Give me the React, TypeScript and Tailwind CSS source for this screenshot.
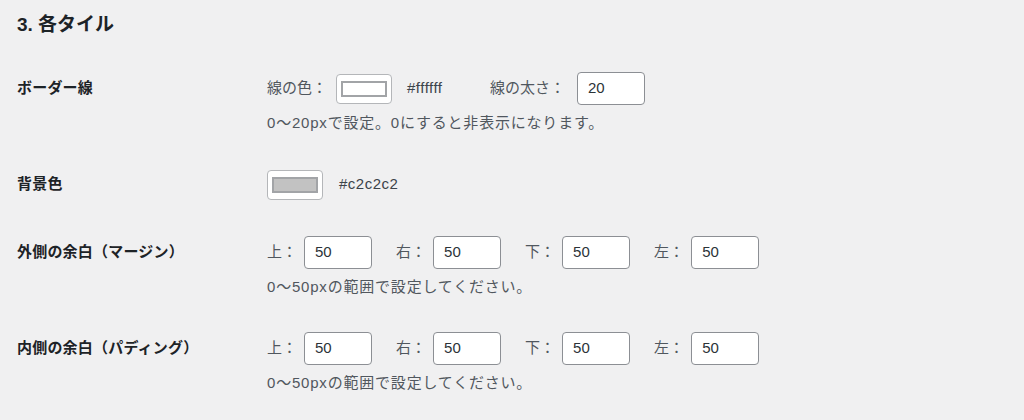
import React from 'react';

const FONT = { fontFamily: '"Liberation Sans", "Noto Sans CJK JP", sans-serif' };

// WordPress風のカラーピッカーボタン
function ColorButton({ color }: { color: string }) {
  return (
    <div className="flex h-[30px] w-[56px] items-center justify-center rounded-[4px] border border-[#b4b6b9] bg-white">
      <div className="h-[16px] w-[46px] border-2 border-[#a2a4a7]" style={{ backgroundColor: color }} />
    </div>
  );
}

function NumInput({ value }: { value: string }) {
  return (
    <div className="flex h-[33px] w-[68px] items-center rounded-[4px] border border-[#8c8f94] bg-white px-[10px] text-[15px] text-[#2c3338]">
      {value}
    </div>
  );
}

function Row({ label, children }: { label: string; children: React.ReactNode }) {
  return (
    <div className="flex pb-[17px] pt-[18px]">
      <div className="flex h-[33px] w-[267px] shrink-0 items-center pl-[17px] text-[15px] font-bold tracking-[0.2px] text-[#1d2327]">
        {label}
      </div>
      <div className="flex flex-col">{children}</div>
    </div>
  );
}

function Desc({ children }: { children: React.ReactNode }) {
  return <p className="mt-[8px] text-[15px] leading-[20px] tracking-[0.8px] text-[#50575e]">{children}</p>;
}

function SpacingFields() {
  const sides = ['上', '右', '下', '左'];
  return (
    <div className="flex h-[33px] items-center gap-[24px]">
      {sides.map((s) => (
        <div key={s} className="flex items-center">
          <span className="text-[15px] text-[#50575e]">{s}：</span>
          <div className="ml-[7px]">
            <NumInput value="50" />
          </div>
        </div>
      ))}
    </div>
  );
}

export default function App() {
  return (
    <div className="min-h-screen w-full bg-[#f0f0f1] pt-[11px]" style={FONT}>
      <h2 className="pl-[17px] text-[19px] font-bold leading-[28px] text-[#1d2327]">3. 各タイル</h2>

      <div className="mt-[15px]">
        {/* ボーダー線 */}
        <Row label="ボーダー線">
          <div className="flex h-[33px] items-center">
            <span className="mr-[9px] text-[15px] text-[#50575e]">線の色：</span>
            <ColorButton color="#ffffff" />
            <span className="ml-[15px] w-[83px] text-[15px] tracking-[0.5px] text-[#3c434a]">#ffffff</span>
            <span className="mr-[12px] text-[15px] text-[#50575e]">線の太さ：</span>
            <NumInput value="20" />
          </div>
          <Desc>0〜20pxで設定。0にすると非表示になります。</Desc>
        </Row>

        {/* 背景色 */}
        <Row label="背景色">
          <div className="flex h-[33px] items-center">
            <ColorButton color="#c2c2c2" />
            <span className="ml-[16px] text-[15px] tracking-[0.5px] text-[#3c434a]">#c2c2c2</span>
          </div>
        </Row>

        <Row label="外側の余白（マージン）">
          <SpacingFields />
          <Desc>0〜50pxの範囲で設定してください。</Desc>
        </Row>

        <Row label="内側の余白（パディング）">
          <SpacingFields />
          <Desc>0〜50pxの範囲で設定してください。</Desc>
        </Row>
      </div>
    </div>
  );
}
